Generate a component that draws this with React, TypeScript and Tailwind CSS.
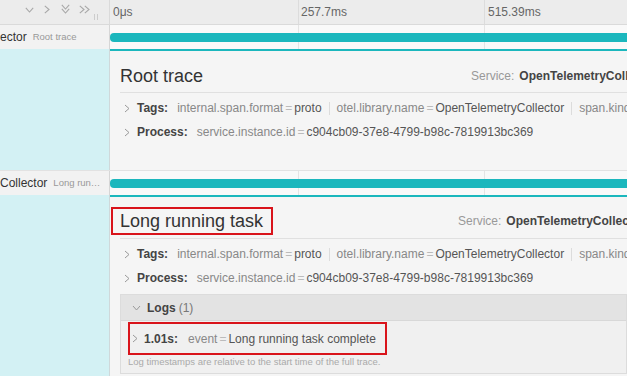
import React from "react"

const Chev = ({ dir = "right", className = "" }: { dir?: "right" | "down"; className?: string }) =>
  dir === "right" ? (
    <svg width="6" height="9" viewBox="0 0 6 9" className={"shrink-0 " + className}>
      <polyline points="1,1 5,4.5 1,8" fill="none" stroke="currentColor" strokeWidth="1" />
    </svg>
  ) : (
    <svg width="9" height="6" viewBox="0 0 9 6" className={"shrink-0 " + className}>
      <polyline points="1,1 4.5,5 8,1" fill="none" stroke="currentColor" strokeWidth="1" />
    </svg>
  )

const Ticks = () => (
  <div className="absolute inset-0 flex">
    <div className="w-[188px] shrink-0" />
    <div className="w-[186px] shrink-0 border-l border-[#e4e4e4]" />
    <div className="flex-1 border-l border-[#e4e4e4]" />
  </div>
)

const SpanRow = ({ name, label }: { name: string; label: string }) => (
  <div className="flex h-[24px]">
    <div className="w-[110px] shrink-0 border-r border-[#d6d6d6] bg-[#f2f2f2] flex items-center overflow-hidden whitespace-nowrap">
      <span className="text-[12px] text-[#333]">{name}</span>
      <span className="ml-[6px] text-[9.5px] text-[#999]">{label}</span>
    </div>
    <div className="relative flex-1 bg-[#f9f9f9]">
      <Ticks />
      <div className="relative mt-[8px] h-[9px] rounded-l-[4px] bg-[#1bb7bd]" />
    </div>
  </div>
)

const KV = ({ k, v }: { k: string; v: string }) => (
  <span className="whitespace-nowrap">
    <span className="text-[#888]">{k}</span>
    <span className="mx-[2px] text-[#bbb]">=</span>
    <span className="text-[#555]">{v}</span>
  </span>
)

const Sep = () => <span className="mx-[7px] h-[13px] w-px shrink-0 bg-[#dcdcdc]" />

const AttrRows = () => (
  <>
    <div className="flex h-[24px] items-center whitespace-nowrap text-[12px]">
      <Chev className="ml-[4px] text-[#999]" />
      <span className="ml-[7px] shrink-0 font-bold text-[#444]">Tags:</span>
      <span className="ml-[9px] flex shrink-0 items-center">
        <KV k="internal.span.format" v="proto" />
        <Sep />
        <KV k="otel.library.name" v="OpenTelemetryCollector" />
        <Sep />
        <KV k="span.kind" v="internal" />
      </span>
    </div>
    <div className="flex h-[24px] items-center whitespace-nowrap text-[12px]">
      <Chev className="ml-[4px] text-[#999]" />
      <span className="ml-[7px] shrink-0 font-bold text-[#444]">Process:</span>
      <span className="ml-[9px] shrink-0">
        <KV k="service.instance.id" v="c904cb09-37e8-4799-b98c-7819913bc369" />
      </span>
    </div>
  </>
)

const Service = () => (
  <span className="whitespace-nowrap text-[12px]">
    <span className="text-[#999]">Service:</span>
    <span className="ml-[5px] font-bold text-[#444]">OpenTelemetryCollector</span>
  </span>
)

const HDown = ({ className = "" }: { className?: string }) => (
  <svg width="9" height="6" viewBox="0 0 9 6" className={"shrink-0 " + className}>
    <polyline points="0.8,0.8 4.5,5 8.2,0.8" fill="none" stroke="currentColor" strokeWidth="1.1" />
  </svg>
)

const HRight = ({ className = "" }: { className?: string }) => (
  <svg width="6" height="9" viewBox="0 0 6 9" className={"shrink-0 " + className}>
    <polyline points="0.8,0.8 5,4.5 0.8,8.2" fill="none" stroke="currentColor" strokeWidth="1.1" />
  </svg>
)

export default function App() {
  return (
    <div className="h-[376px] w-[627px] overflow-hidden bg-[#f5f5f5] font-['Liberation_Sans',Arial,sans-serif]">
      {/* header */}
      <div className="flex h-[25px] border-b border-[#dadada] bg-[#ececec]">
        <div className="flex w-[110px] shrink-0 items-start border-r border-[#dadada] pt-[4px] text-[#a8a8a8]">
          <div className="ml-[25px] mt-[3px]"><HDown /></div>
          <div className="ml-[10px] mt-[1px]"><HRight /></div>
          <div className="ml-[11px] flex flex-col">
            <HDown />
            <HDown className="-mt-[2px]" />
          </div>
          <div className="ml-[9px] mt-[1px] flex">
            <HRight />
            <HRight className="-ml-[1px]" />
          </div>
          <div className="ml-[4px] mt-[10px] flex gap-[2px]">
            <span className="h-[6px] w-px bg-[#ccc]" />
            <span className="h-[6px] w-px bg-[#ccc]" />
          </div>
        </div>
        <div className="flex flex-1 text-[12px] text-[#666]">
          <div className="w-[188px] shrink-0 pl-[3px] pt-[3px]">0μs</div>
          <div className="w-[186px] shrink-0 border-l border-[#dcdcdc] pl-[2px] pt-[3px]">257.7ms</div>
          <div className="flex-1 border-l border-[#dcdcdc] pl-[3px] pt-[3px]">515.39ms</div>
        </div>
      </div>

      <SpanRow name="ector" label="Root trace" />

      {/* detail 1 */}
      <div className="flex h-[122px] border-b border-[#e2e2e2]">
        <div className="w-[110px] shrink-0 border-r border-[#cfd8da] bg-[#d3f1f4]" />
        <div className="min-w-0 flex-1 overflow-hidden border-t-2 border-[#1bb7bd] bg-[#f5f5f5] pl-[10px]">
          <div className="flex items-center border-b border-[#e0e0e0] pt-[14px] pb-[5px]">
            <div className="w-[351px] shrink-0 text-[18px] leading-[22px] text-[#333]">Root trace</div>
            <Service />
          </div>
          <div className="mt-[3px]">
            <AttrRows />
          </div>
        </div>
      </div>

      <SpanRow name="Collector" label="Long run…" />

      {/* detail 2 */}
      <div className="flex h-[182px]">
        <div className="w-[110px] shrink-0 border-r border-[#cfd8da] bg-[#d3f1f4]" />
        <div className="min-w-0 flex-1 overflow-hidden border-t-2 border-[#1bb7bd] bg-[#f5f5f5] pl-[10px]">
          <div className="flex items-center border-b border-[#e0e0e0] pt-[10px] pb-[3px]">
            <div className="-ml-[9px] w-[347px] shrink-0">
              <span className="inline-block border-2 border-[#d9141b] py-[1px] pl-[7px] pr-[8px] text-[18px] leading-[22px] text-[#333]">
                Long running task
              </span>
            </div>
            <Service />
          </div>
          <div className="mt-[3px]">
            <AttrRows />
          </div>
          <div className="mt-[4px] border border-[#dcdcdc] bg-[#f0f0f0]">
            <div className="flex h-[26px] items-center border-b border-[#d8d8d8] bg-[#e3e3e3] text-[12px]">
              <Chev dir="down" className="ml-[11px] text-[#999]" />
              <span className="ml-[6px] font-bold text-[#444]">Logs</span>
              <span className="ml-[3px] text-[#777]">(1)</span>
            </div>
            <div className="pl-[7px] pb-[5px] pt-[1px]">
              <div className="inline-flex h-[33px] items-center border-2 border-[#d9141b] pr-[9px] text-[12px] whitespace-nowrap">
                <Chev className="ml-[2px] text-[#999]" />
                <span className="ml-[6px] font-bold text-[#444]">1.01s:</span>
                <span className="ml-[10px]">
                  <KV k="event" v="Long running task complete" />
                </span>
              </div>
              <div className="mt-[1px] text-[9.5px] leading-[12px] text-[#aaa]">
                Log timestamps are relative to the start time of the full trace.
              </div>
            </div>
          </div>
        </div>
      </div>
    </div>
  )
}
